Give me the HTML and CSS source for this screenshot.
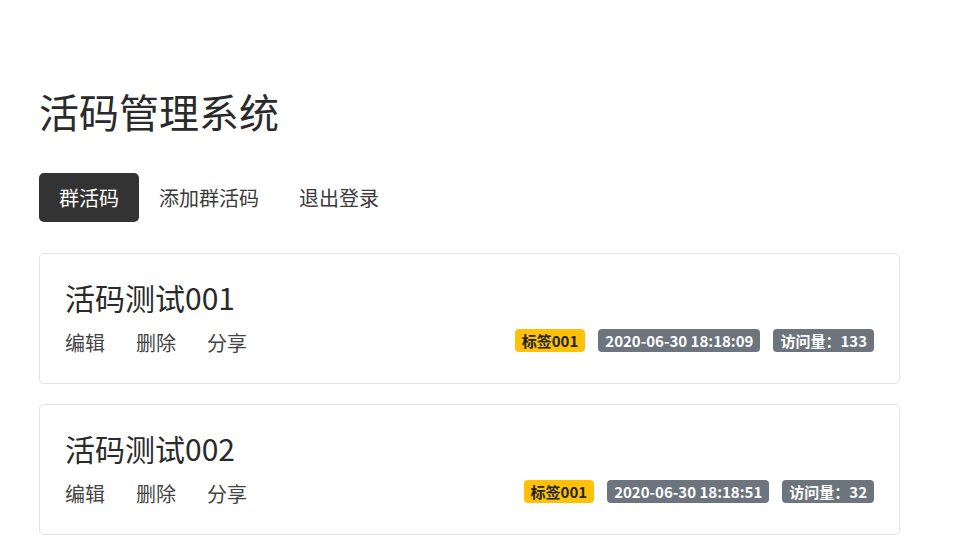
FILE: index.html
```html
<!DOCTYPE html>
<html lang="zh-CN">
<head>
<meta charset="utf-8">
<title>活码管理系统</title>
<link rel="stylesheet" href="styles.css">
</head>
<body>
<div class="container">
  <h2 class="page-title">活码管理系统</h2>
  <nav class="nav">
    <a class="nav-link active">群活码</a>
    <a class="nav-link">添加群活码</a>
    <a class="nav-link">退出登录</a>
  </nav>
  <div class="list">
    <div class="card">
      <h4 class="card-title">活码测试001</h4>
      <div class="card-row">
        <div class="actions">
          <a class="action">编辑</a>
          <a class="action">删除</a>
          <a class="action">分享</a>
        </div>
        <div class="badges">
          <span class="badge badge-warning">标签001</span>
          <span class="badge badge-secondary">2020-06-30 18:18:09</span>
          <span class="badge badge-secondary">访问量：133</span>
        </div>
      </div>
    </div>
    <div class="card">
      <h4 class="card-title">活码测试002</h4>
      <div class="card-row">
        <div class="actions">
          <a class="action">编辑</a>
          <a class="action">删除</a>
          <a class="action">分享</a>
        </div>
        <div class="badges">
          <span class="badge badge-warning">标签001</span>
          <span class="badge badge-secondary">2020-06-30 18:18:51</span>
          <span class="badge badge-secondary">访问量：32</span>
        </div>
      </div>
    </div>
  </div>
</div>
</body>
</html>
```

FILE: styles.css
```css
* { box-sizing: border-box; }
html, body {
  margin: 0;
  background: #fff;
}
body {
  font-family: "Noto Sans CJK SC", "Noto Sans", "Liberation Sans", sans-serif;
  color: #212529;
}
.container {
  width: 900px;
  padding: 87px 0 0 39px;
}
.page-title {
  margin: 0 0 38px;
  font-size: 40px;
  line-height: 48px;
  font-weight: 400;
  color: #2a2a2a;
}
.nav {
  display: flex;
  margin-bottom: 31px;
}
.nav-link {
  display: block;
  padding: 12.5px 20px;
  font-size: 20px;
  line-height: 24px;
  color: #3a3a3a;
  border-radius: 5px;
  text-decoration: none;
}
.nav-link.active {
  background: #333;
  color: #fff;
}
.list {
  display: flex;
  flex-direction: column;
  gap: 20px;
}
.card {
  border: 1px solid #e3e3e3;
  border-radius: 5px;
  padding: 25px;
  height: 131px;
}
.card-title {
  margin: 0 0 13px;
  font-size: 30px;
  line-height: 36px;
  font-weight: 400;
  color: #2a2a2a;
}
.card-row {
  display: flex;
  justify-content: space-between;
  align-items: center;
}
.actions {
  display: flex;
  gap: 31px;
}
.action {
  font-size: 20px;
  line-height: 30px;
  color: #444;
  text-decoration: none;
}
.badges {
  display: flex;
  gap: 13px;
  margin-bottom: 5px;
}
.badge {
  display: inline-block;
  padding: 4px 7px;
  font-size: 15px;
  line-height: 15px;
  font-weight: 700;
  border-radius: 4px;
  white-space: nowrap;
}
.badge-warning {
  background: #ffc107;
  color: #212529;
}
.badge-secondary {
  background: #6c757d;
  color: #fff;
}
```
